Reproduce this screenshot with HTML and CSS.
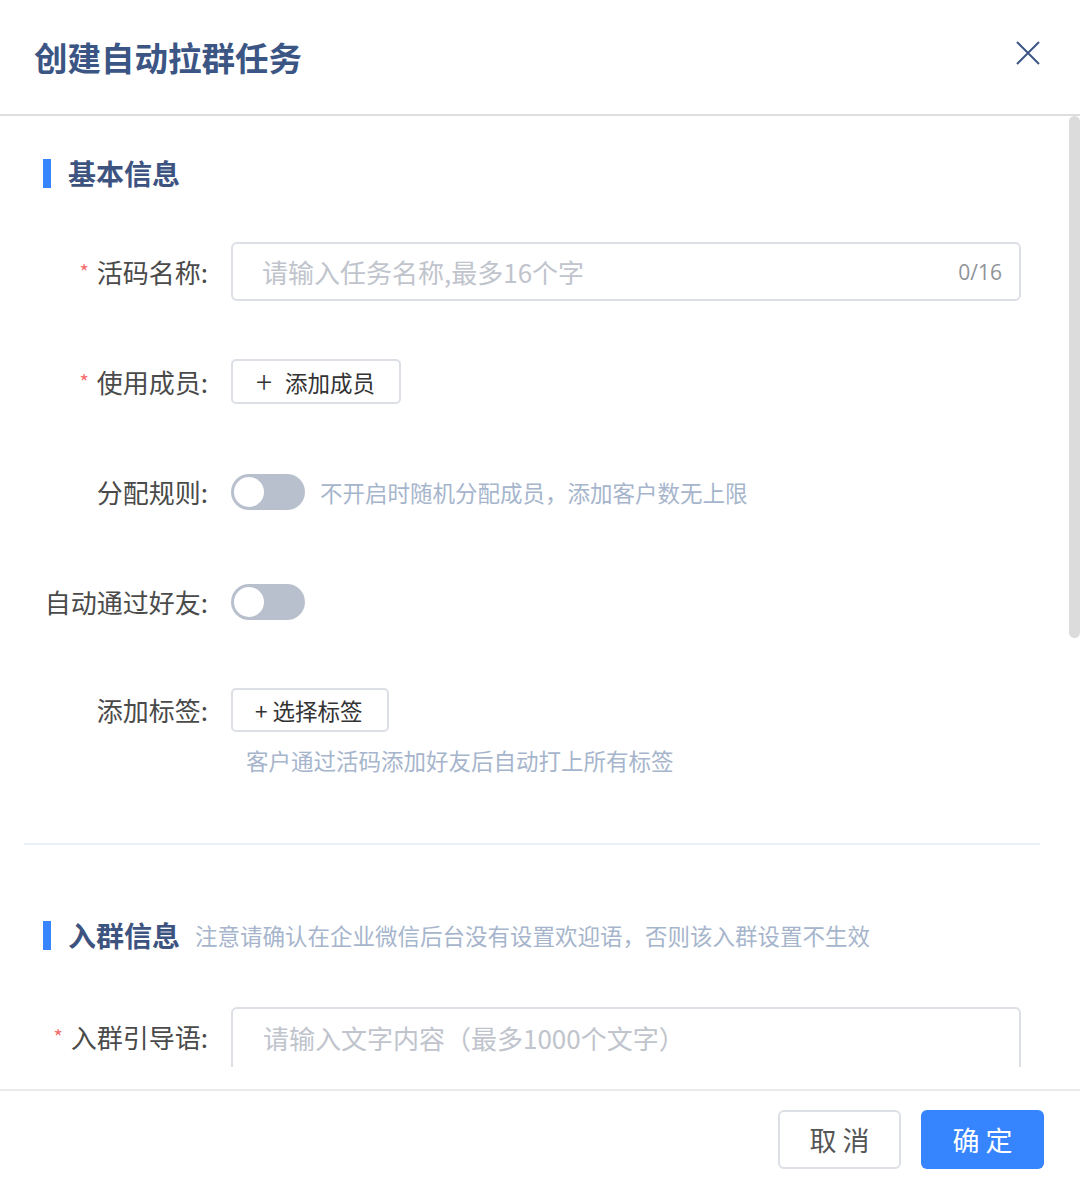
FILE: index.html
```html
<!DOCTYPE html>
<html lang="zh-CN">
<head>
    <meta charset="UTF-8" />
    <title>创建自动拉群任务</title>
    <link rel="stylesheet" href="styles.css">
</head>
<body>
    <div class="dialog">
        <div class="dialog-header">
            <h2 class="dialog-title">创建自动拉群任务</h2>
            <svg class="close" width="24" height="24" viewBox="0 0 24 24">
                <path d="M1 1 L23 23 M23 1 L1 23" stroke="#3b5584" stroke-width="2" fill="none" />
            </svg>
        </div>

        <div class="dialog-main">
            <div class="dialog-body">
                <div class="section-title first">
                    <span class="bar"></span>
                    <span class="section-name">基本信息</span>
                </div>

                <div class="form-item">
                    <label class="label"><span class="req">*</span>活码名称:</label>
                    <div class="control">
                        <div class="input">
                            <span class="placeholder">请输入任务名称,最多16个字</span>
                            <span class="count">0/16</span>
                        </div>
                    </div>
                </div>

                <div class="form-item">
                    <label class="label"><span class="req">*</span>使用成员:</label>
                    <div class="control">
                        <button class="btn-add"><span class="plus">+</span>添加成员</button>
                    </div>
                </div>

                <div class="form-item">
                    <label class="label">分配规则:</label>
                    <div class="control">
                        <span class="switch"><span class="knob"></span></span>
                        <span class="hint">不开启时随机分配成员，添加客户数无上限</span>
                    </div>
                </div>

                <div class="form-item pre-tags">
                    <label class="label">自动通过好友:</label>
                    <div class="control">
                        <span class="switch"><span class="knob"></span></span>
                    </div>
                </div>

                <div class="form-item tags">
                    <label class="label">添加标签:</label>
                    <div class="control-col">
                        <div class="control">
                            <button class="btn-tag">+ 选择标签</button>
                        </div>
                        <div class="hint under">客户通过活码添加好友后自动打上所有标签</div>
                    </div>
                </div>

                <div class="divider"></div>

                <div class="section-title">
                    <span class="bar"></span>
                    <span class="section-name">入群信息</span>
                    <span class="section-note">注意请确认在企业微信后台没有设置欢迎语，否则该入群设置不生效</span>
                </div>

                <div class="form-item area">
                    <label class="label"><span class="req">*</span>入群引导语:</label>
                    <div class="control top">
                        <div class="textarea">
                            <span class="placeholder serif">请输入文字内容（最多1000个文字）</span>
                        </div>
                    </div>
                </div>
            </div>
            <div class="scroll-thumb"></div>
        </div>

        <div class="dialog-footer">
            <button class="btn-cancel">取 消</button>
            <button class="btn-ok">确 定</button>
        </div>
    </div>
</body>
</html>
```

FILE: styles.css
```css
body {
    margin: 0;
    background: #fff;
    font-family: "Noto Sans CJK SC", "Noto Sans", sans-serif;
}

.dialog {
    width: 1080px;
    height: 1182px;
    display: flex;
    flex-direction: column;
    background: #fff;
}

/* header */
.dialog-header {
    height: 114px;
    border-bottom: 2px solid #dedede;
    display: flex;
    align-items: center;
    justify-content: space-between;
    padding: 0 40px 0 34px;
}

.dialog-title {
    margin: 0;
    font-size: 33.5px;
    font-weight: bold;
    color: #3b5584;
    margin-top: -2px;
}

.close {
    margin-top: -8px;
}

/* body */
.dialog-main {
    position: relative;
    height: 951px;
}

.dialog-body {
    height: 951px;
    overflow: hidden;
    padding: 42px 40px 0 24px;
    box-sizing: border-box;
}

.scroll-thumb {
    position: absolute;
    right: 0;
    top: 0;
    width: 11px;
    height: 522px;
    border-radius: 6px;
    background: #dcdcdc;
}

.section-title {
    display: flex;
    align-items: center;
    height: 30px;
    padding-left: 19px;
}

.bar {
    width: 8px;
    height: 29px;
    background: #3784ff;
    margin-right: 17px;
}

.section-name {
    font-size: 28px;
    font-weight: bold;
    color: #3d5380;
    line-height: 30px;
}

.section-note {
    font-size: 22.5px;
    color: #a6b5cc;
    margin-left: 15px;
    line-height: 30px;
}

.section-title.first {
    margin-bottom: 54px;
}

.form-item {
    display: flex;
    align-items: flex-start;
    margin-bottom: 51px;
}

.label {
    width: 184px;
    flex-shrink: 0;
    text-align: right;
    font-size: 26px;
    color: #4a4a4a;
    line-height: 59px;
    height: 59px;
    white-space: nowrap;
}

.req {
    color: #f56c6c;
    font-size: 20px;
    margin-right: 8px;
    position: relative;
    top: -3px;
}

.control {
    margin-left: 23px;
    height: 59px;
    display: flex;
    align-items: center;
}

.control-col {
    display: flex;
    flex-direction: column;
}

.input {
    width: 790px;
    height: 59px;
    box-sizing: border-box;
    border: 2px solid #dcdfe6;
    border-radius: 6px;
    display: flex;
    align-items: center;
    justify-content: space-between;
    padding: 0 17px 0 29px;
}

.placeholder {
    font-size: 26px;
    color: #c0c4cc;
}

.count {
    font-family: "Open Sans", sans-serif;
    font-size: 21px;
    color: #909399;
}

.btn-add,
.btn-tag {
    height: 45px;
    background: #fff;
    border: 2px solid #dcdfe6;
    border-radius: 5px;
    font-family: inherit;
    font-size: 22.5px;
    color: #333;
    padding: 0 10px 0 23px;
    display: flex;
    align-items: center;
    white-space: nowrap;
}

.btn-add {
    width: 170px;
}

.plus {
    font-size: 30px;
    font-weight: 300;
    margin-right: 13px;
    line-height: 1;
    margin-top: -3px;
}

.btn-tag {
    height: 44px;
    width: 158px;
    padding: 0 10px 0 22px;
}

.switch {
    position: relative;
    width: 74px;
    height: 36px;
    border-radius: 18px;
    background: #b9c0cd;
    display: inline-block;
}

.knob {
    position: absolute;
    left: 3px;
    top: 3px;
    width: 30px;
    height: 30px;
    border-radius: 50%;
    background: #fff;
}

.hint {
    font-size: 22.5px;
    color: #a6b5cc;
    margin-left: 15px;
}

.hint.under {
    margin-left: 38px;
    margin-top: 6px;
    line-height: 30px;
}

.form-item.pre-tags {
    margin-bottom: 49px;
}

.form-item.tags {
    margin-bottom: 0;
}

.divider {
    height: 2px;
    background: #e8f0fa;
    margin: 68px 0 75px;
}

.form-item.area {
    margin-top: 57px;
}

.textarea {
    width: 790px;
    height: 100px;
    box-sizing: border-box;
    border: 2px solid #dcdfe6;
    border-radius: 6px;
    padding: 10px 30px;
}

.control.top {
    align-items: flex-start;
    height: auto;
}

.serif {
    font-family: "Noto Sans CJK SC", serif;
}

/* footer */
.dialog-footer {
    margin-top: 22px;
    border-top: 2px solid #ebebeb;
    flex: 1;
    display: flex;
    justify-content: flex-end;
    align-items: flex-start;
    gap: 20px;
    padding: 19px 36px 0 0;
}

.btn-cancel,
.btn-ok {
    width: 123px;
    height: 59px;
    border-radius: 6px;
    font-family: inherit;
    font-size: 27px;
}

.btn-cancel {
    background: #fff;
    border: 2px solid #dcdfe6;
    color: #555;
}

.btn-ok {
    background: #3784ff;
    border: none;
    color: #fff;
}
```
